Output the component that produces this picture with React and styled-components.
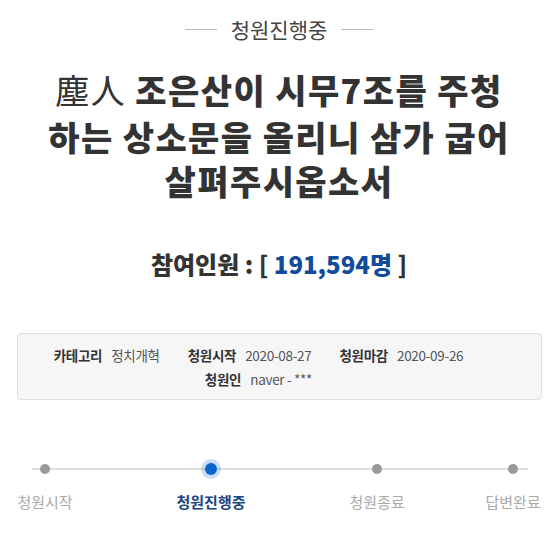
import styled, { createGlobalStyle } from "styled-components";

const GlobalStyle = createGlobalStyle`
  html, body {
    margin: 0;
    padding: 0;
    background: #fff;
  }

  body {
    font-family: "Noto Sans CJK KR", "Noto Sans", sans-serif;
    color: #333;
  }
`;

const Page = styled.div`
  width: 558px;
  padding-top: 15px;
  overflow: hidden;
`;

const Status = styled.div`
  display: flex;
  align-items: center;
  justify-content: center;
  gap: 14px;
  height: 28px;
  font-size: 21px;
  line-height: 28px;
  color: #444;

  &::before,
  &::after {
    content: "";
    width: 32px;
    height: 1px;
    background: #bbb;
  }
`;

const Title = styled.h1`
  margin: 25px 45px 0;
  font-size: 34px;
  line-height: 44px;
  font-weight: 800;
  letter-spacing: 1.4px;
  text-align: center;
  color: #333;
`;

const Hanja = styled.span`
  font-family: "Liberation Serif", "Noto Sans CJK KR", serif;
  font-weight: 400;
`;

const Count = styled.div`
  margin-top: 45px;
  font-size: 24px;
  line-height: 32px;
  font-weight: 800;
  text-align: center;
  color: #333;
`;

const CountNumber = styled.span`
  color: #134b9c;
`;

const InfoBox = styled.div`
  margin: 53px 16px 0 17px;
  padding: 9px 14px 8px 0;
  background: #f6f6f6;
  border: 1px solid #dedede;
  border-radius: 4px;
`;

const InfoList = styled.ul`
  display: flex;
  flex-wrap: wrap;
  justify-content: center;
  margin: 0;
  padding: 0;
  list-style: none;
`;

const InfoItem = styled.li`
  display: flex;
  gap: 9px;
  margin-right: 28px;
  font-size: 13.5px;
  line-height: 24px;
  letter-spacing: -0.3px;
`;

const InfoLabel = styled.strong`
  font-weight: 700;
  color: #333;
`;

const InfoValue = styled.span`
  color: #555;
`;

const Steps = styled.ol`
  position: relative;
  display: grid;
  grid-template-columns: 90px 166px 166px 136px;
  justify-items: end;
  margin: 59px 0 0;
  padding: 0;
  list-style: none;

  &::before {
    content: "";
    position: absolute;
    top: 9px;
    left: 32px;
    right: 30px;
    height: 2px;
    background: #ddd;
  }
`;

const Step = styled.li`
  position: relative;
  display: flex;
  flex-direction: column;
  align-items: center;
  width: 90px;
`;

const Dot = styled.span`
  display: flex;
  align-items: center;
  justify-content: center;
  height: 20px;

  &::before {
    content: "";
    width: ${(p) => (p.$active ? "12px" : "10px")};
    height: ${(p) => (p.$active ? "12px" : "10px")};
    border-radius: 50%;
    background: ${(p) => (p.$active ? "#0b66cc" : "#999")};
    box-shadow: ${(p) => (p.$active ? "0 0 0 4px rgba(11, 102, 204, 0.22)" : "none")};
  }
`;

const StepLabel = styled.span`
  margin-top: 12px;
  font-size: 15px;
  line-height: 22px;
  font-weight: ${(p) => (p.$active ? 700 : 400)};
  color: ${(p) => (p.$active ? "#1c4482" : "#aaa")};
  white-space: nowrap;
`;

const info = [
  { label: "카테고리", value: "정치개혁" },
  { label: "청원시작", value: "2020-08-27" },
  { label: "청원마감", value: "2020-09-26" },
  { label: "청원인", value: "naver - ***" },
];

const steps = [
  { label: "청원시작" },
  { label: "청원진행중", active: true },
  { label: "청원종료" },
  { label: "답변완료" },
];

const App = () => {
  return (
    <Page>
      <GlobalStyle />
      <Status>청원진행중</Status>
      <Title>
        <Hanja>塵人</Hanja> 조은산이 시무7조를 주청하는 상소문을 올리니 삼가 굽어 살펴주시옵소서
      </Title>
      <Count>
        참여인원 : [ <CountNumber>191,594명</CountNumber> ]
      </Count>
      <InfoBox>
        <InfoList>
          {info.map((item) => (
            <InfoItem key={item.label}>
              <InfoLabel>{item.label}</InfoLabel>
              <InfoValue>{item.value}</InfoValue>
            </InfoItem>
          ))}
        </InfoList>
      </InfoBox>
      <Steps>
        {steps.map((step) => (
          <Step key={step.label}>
            <Dot $active={step.active} />
            <StepLabel $active={step.active}>{step.label}</StepLabel>
          </Step>
        ))}
      </Steps>
    </Page>
  );
};

export default App;
